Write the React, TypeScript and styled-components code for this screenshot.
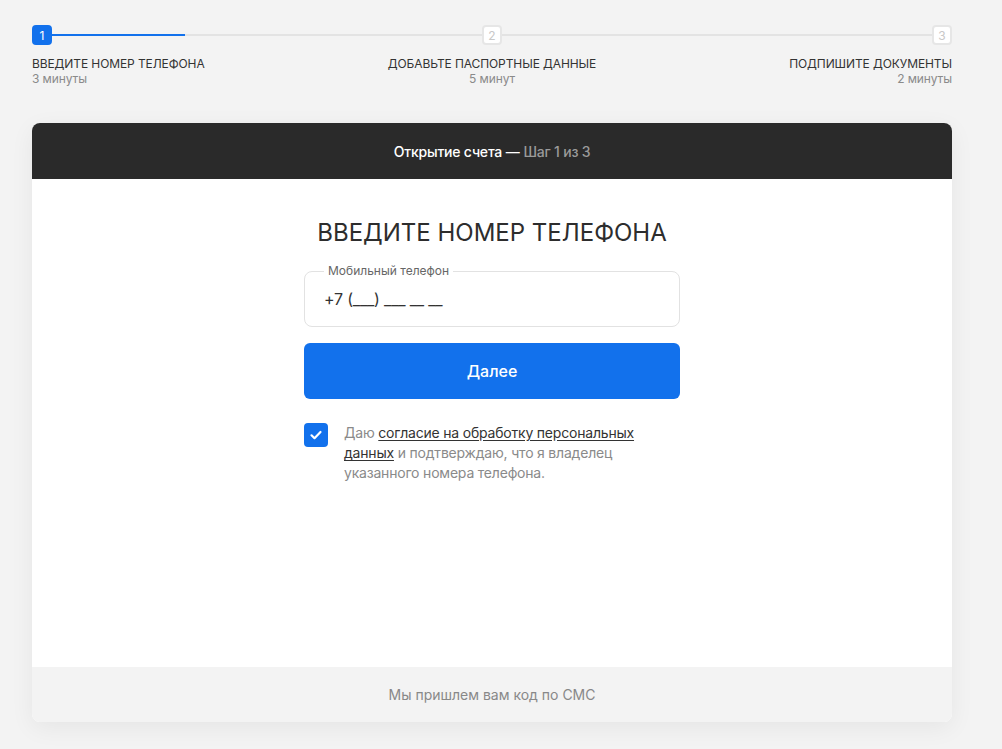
import styled, { createGlobalStyle } from 'styled-components'

// Первый шаг открытия счёта: прогресс сверху, карточка с вводом телефона.
const GlobalStyle = createGlobalStyle`
  html, body {
    margin: 0;
    background: #f3f3f3;
    font-family: Inter, "Noto Sans", Arial, sans-serif;
    color: #333;
  }
`

const steps = [
  { n: 1, title: 'Введите номер телефона', time: '3 минуты' },
  { n: 2, title: 'Добавьте паспортные данные', time: '5 минут' },
  { n: 3, title: 'Подпишите документы', time: '2 минуты' },
]

const aligns = ['left', 'center', 'right'] as const

export default function App() {
  return (
    <>
      <GlobalStyle />
      <Page>
        <Stepper>
          <Track>
            <StepBox $active>1</StepBox>
            <Line>
              <Progress style={{ width: '31%' }} />
            </Line>
            <StepBox>2</StepBox>
            <Line />
            <StepBox>3</StepBox>
          </Track>
          <Labels>
            {steps.map((s, i) => (
              <Label key={s.n} $align={aligns[i]}>
                <LabelTitle>{s.title}</LabelTitle>
                <LabelTime>{s.time}</LabelTime>
              </Label>
            ))}
          </Labels>
        </Stepper>

        <Card>
          <CardHeader>
            <strong>Открытие счета</strong> — <Muted>Шаг 1 из 3</Muted>
          </CardHeader>
          <CardBody>
            <Form>
              <Title>Введите номер телефона</Title>
              <Field>
                <Legend>Мобильный телефон</Legend>
                <Value>+7 (___) ___ __ __</Value>
              </Field>
              <Button>Далее</Button>
              <Consent>
                <Check>
                  <svg width="16" height="16" viewBox="0 0 16 16" fill="none">
                    <path
                      d="M3.5 8.3l3 2.9 6-6.2"
                      stroke="#fff"
                      strokeWidth="2.2"
                      strokeLinecap="round"
                      strokeLinejoin="round"
                    />
                  </svg>
                </Check>
                <ConsentText>
                  Даю <Link href="#">согласие на обработку персональных данных</Link> и
                  подтверждаю, что я владелец указанного номера телефона.
                </ConsentText>
              </Consent>
            </Form>
          </CardBody>
          <CardFooter>Мы пришлем вам код по СМС</CardFooter>
        </Card>
      </Page>
    </>
  )
}

const Page = styled.div`
  padding: 25px 50px 27px 32px;
`

const Stepper = styled.div`
  display: flex;
  flex-direction: column;
`

const Track = styled.div`
  display: flex;
  align-items: center;
`

const StepBox = styled.div<{ $active?: boolean }>`
  width: 20px;
  height: 20px;
  box-sizing: border-box;
  border-radius: 4px;
  display: flex;
  align-items: center;
  justify-content: center;
  font-size: 12px;
  background: ${({ $active }) => ($active ? '#1271ec' : '#fff')};
  color: ${({ $active }) => ($active ? '#fff' : '#c8c8c8')};
  border: 2px solid ${({ $active }) => ($active ? '#1271ec' : '#e6e6e6')};
`

const Line = styled.div`
  flex: 1;
  height: 2px;
  background: #e3e3e3;
`

const Progress = styled.div`
  height: 100%;
  background: #1271ec;
`

const Labels = styled.div`
  display: grid;
  grid-template-columns: 1fr auto 1fr;
  margin-top: 11px;
`

const Label = styled.div<{ $align: 'left' | 'center' | 'right' }>`
  display: flex;
  flex-direction: column;
  text-align: ${({ $align }) => $align};
  font-size: 12px;
  line-height: 15px;
  letter-spacing: -0.1px;
`

const LabelTitle = styled.span`
  text-transform: uppercase;
  color: #333;
`

const LabelTime = styled.span`
  color: #8a8a8a;
`

const Card = styled.div`
  margin-top: 37px;
  background: #fff;
  border-radius: 8px;
  overflow: hidden;
  box-shadow: 0 6px 24px rgba(0, 0, 0, 0.06);
  display: flex;
  flex-direction: column;
`

const CardHeader = styled.div`
  height: 56px;
  background: #2a2a2a;
  color: #fff;
  display: flex;
  align-items: center;
  justify-content: center;
  font-size: 14px;
  letter-spacing: -0.2px;
  white-space: pre;

  strong {
    font-weight: 500;
  }
`

const Muted = styled.span`
  color: #9a9a9a;
  font-weight: 500;
`

const CardBody = styled.div`
  height: 488px;
  display: flex;
  justify-content: center;
`

const Form = styled.div`
  width: 376px;
  padding-top: 39px;
  display: flex;
  flex-direction: column;
`

const Title = styled.h1`
  margin: 0 0 23px;
  text-align: center;
  font-size: 24px;
  line-height: 30px;
  font-weight: 400;
  text-transform: uppercase;
  color: #2d2d2d;
`

const Field = styled.div`
  position: relative;
  height: 56px;
  box-sizing: border-box;
  border: 1px solid #e2e2e2;
  border-radius: 8px;
  padding: 0 19px;
  display: flex;
  align-items: center;
`

const Legend = styled.span`
  position: absolute;
  left: 19px;
  top: -8px;
  padding: 0 4px;
  background: #fff;
  font-size: 12px;
  line-height: 14px;
  color: #666;
`

const Value = styled.div`
  font-size: 16px;
  letter-spacing: -0.2px;
  color: #333;
`

const Button = styled.button`
  margin-top: 16px;
  height: 56px;
  border: 0;
  border-radius: 6px;
  background: #1271ec;
  color: #fff;
  font-family: inherit;
  font-size: 16px;
  font-weight: 500;
  cursor: pointer;
`

const Consent = styled.label`
  margin-top: 24px;
  display: flex;
  gap: 16px;
  align-items: flex-start;
`

const Check = styled.span`
  flex: none;
  width: 24px;
  height: 24px;
  border-radius: 4px;
  background: #1271ec;
  display: flex;
  align-items: center;
  justify-content: center;
`

const ConsentText = styled.p`
  margin: 0;
  width: 300px;
  font-size: 14px;
  line-height: 20px;
  letter-spacing: -0.2px;
  color: #8a8a8a;
`

const Link = styled.a`
  color: #333;
  text-decoration: underline;
  text-underline-offset: 2px;
`

const CardFooter = styled.div`
  height: 55px;
  background: #f3f3f3;
  color: #888;
  font-size: 14px;
  display: flex;
  align-items: center;
  justify-content: center;
`
